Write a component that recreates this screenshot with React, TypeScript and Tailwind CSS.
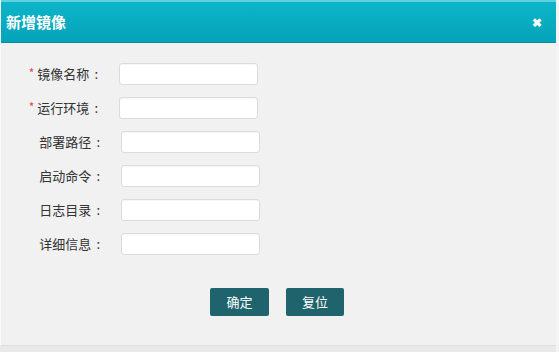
import React from 'react';

interface FieldRowProps {
  label: string;
  required?: boolean;
}

const FieldRow: React.FC<FieldRowProps> = ({ label, required }) => {
  return (
    <div className="flex items-center h-[34px]">
      <div className={`flex items-center justify-end ${required ? 'w-[118px] pr-[21px]' : 'w-[120px] pr-[21px]'}`}>
        {required && <span className="text-[#e0455a] text-[12px] mr-[3px] mt-[-2px]">*</span>}
        <span className="text-[13px] text-[#333]">{label}</span>
        <span className="text-[13px] text-[#333] ml-[5px]">:</span>
      </div>
      <input
        type="text"
        className="w-[139px] h-[22px] bg-white border border-[#dcdcdc] rounded-[3px] outline-none shadow-[inset_0_1px_1px_rgba(0,0,0,0.04)]"
      />
    </div>
  );
};

const App: React.FC = () => {
  const fields = [
    { label: '镜像名称', required: true },
    { label: '运行环境', required: true },
    { label: '部署路径' },
    { label: '启动命令' },
    { label: '日志目录' },
    { label: '详细信息' },
  ];

  return (
    <div
      className="w-[559px] h-[352px] flex bg-[#e9e9e9]"
      style={{ fontFamily: '"Microsoft YaHei", "Noto Sans CJK SC", "Liberation Sans", sans-serif' }}
    >
      <div className="w-[556px] h-[346px] flex flex-col bg-[#f1f1f1] border-l border-[#fafafa] border-b border-b-[#dedede]">
        <div className="h-[43px] flex items-center justify-between pl-[5px] pr-[14px] bg-gradient-to-b from-[#0cb5c9] to-[#05a3b8] border-t-2 border-t-[#5fd0dc] border-b border-b-[#0a8a9a]">
          <span className="text-white font-bold text-[15px]">新增镜像</span>
          <span className="text-white font-bold text-[12px] leading-none">✖</span>
        </div>
        <div className="flex flex-col pt-[14px]">
          {fields.map((f) => (
            <FieldRow key={f.label} label={f.label} required={f.required} />
          ))}
        </div>
        <div className="flex gap-[17px] pl-[209px] mt-[27px]">
          <button className="w-[59px] h-[28px] bg-[#1f646c] text-white text-[13px] rounded-[2px]">确定</button>
          <button className="w-[58px] h-[28px] bg-[#1f646c] text-white text-[13px] rounded-[2px]">复位</button>
        </div>
      </div>
      <div className="flex-1 bg-[#f4f4f4]" />
    </div>
  );
};

export default App;
